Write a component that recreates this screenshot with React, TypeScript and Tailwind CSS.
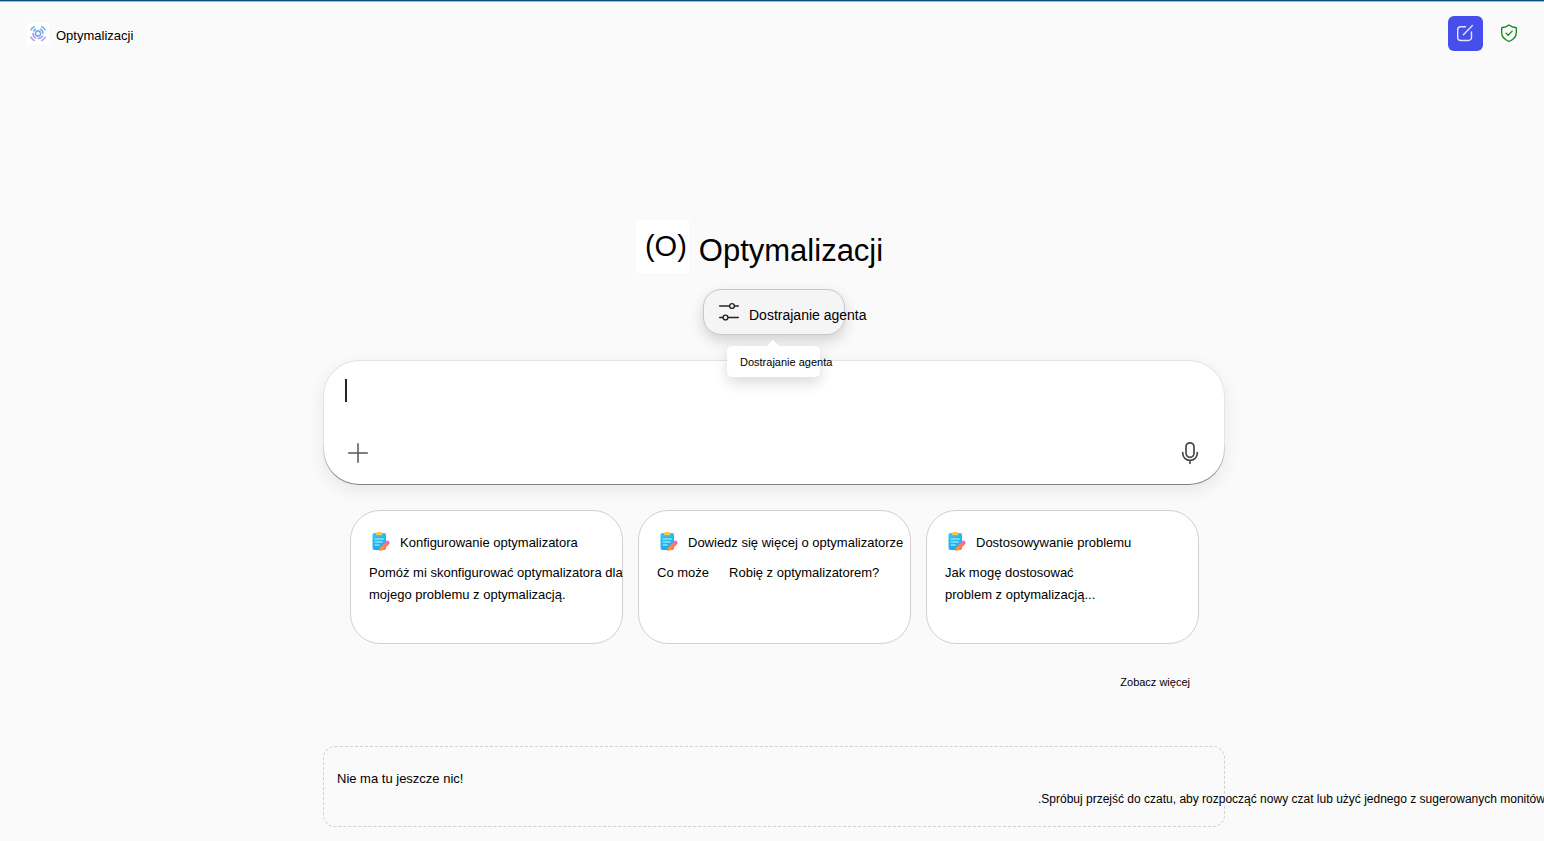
import type { ReactNode } from "react";

type Prompt = {
  title: string;
  lines: ReactNode[];
};

const prompts: Prompt[] = [
  {
    title: "Konfigurowanie optymalizatora",
    lines: ["Pomóż mi skonfigurować optymalizatora dla", "mojego problemu z optymalizacją."],
  },
  {
    title: "Dowiedz się więcej o optymalizatorze",
    lines: [
      <span className="flex gap-5">
        <span>Co może</span>
        <span>Robię z optymalizatorem?</span>
      </span>,
    ],
  },
  {
    title: "Dostosowywanie problemu",
    lines: ["Jak mogę dostosować", "problem z optymalizacją..."],
  },
];

export default function App() {
  return (
    <div className="min-h-screen overflow-x-hidden border-t border-[#0f4c81] bg-[#fafafa] font-['Liberation_Sans',Arial,sans-serif] text-[13px] text-black">
      <header className="flex items-start justify-between border-t border-[#9fb6cc] pr-[26px] pl-[27px] pt-[14px]">
        <div className="flex items-center gap-[7px] pt-[6px]">
          <span className="flex size-[22px] items-center justify-center bg-white">
            <AgentLogo />
          </span>
          <span className="pt-1 leading-5">Optymalizacji</span>
        </div>
        <div className="flex items-center gap-[17px]">
          <button
            type="button"
            aria-label="Nowy czat"
            className="flex size-[35px] items-center justify-center rounded-md bg-[#464feb]"
          >
            <ComposeIcon />
          </button>
          <button type="button" aria-label="Ochrona danych">
            <ShieldIcon />
          </button>
        </div>
      </header>

      <main className="pt-[169px] pb-[14px] pl-1">
        <div className="mx-auto max-w-[902px]">
          <div className="flex justify-center gap-[10px] pr-[29px]">
            <span className="flex h-[53px] w-[53px] items-center justify-end bg-white pr-[2px] text-[29px] leading-[53px]">
              (O)
            </span>
            <h1 className="pt-2 text-[31px] leading-[45px]">Optymalizacji</h1>
          </div>

          <div className="relative mx-auto mt-4 w-[142px]">
            <button
              type="button"
              className="flex h-[46px] w-full items-center gap-[10px] rounded-[18px] border border-[#c7c7c7] bg-[#f5f5f5] pl-[15px] text-sm whitespace-nowrap shadow-[0_6px_14px_rgba(0,0,0,0.16)]"
            >
              <TuneIcon />
              <span className="pt-[6px]">Dostrajanie agenta</span>
            </button>
            <div
              role="tooltip"
              className="absolute top-[57px] left-6 z-10 h-[31px] w-[93px] rounded-[5px] bg-white pl-[13px] text-[11px] leading-8 whitespace-nowrap shadow-[0_6px_14px_rgba(0,0,0,0.14)]"
            >
              <svg className="absolute -top-[6px] left-[39px]" width="14" height="7" viewBox="0 0 14 7">
                <path d="M0 7 6 .8Q7-.2 8 .8L14 7Z" fill="#fff" />
              </svg>
              Dostrajanie agenta
            </div>
          </div>

          <form className="mt-[25px] rounded-[36px] bg-[linear-gradient(to_bottom,#e3e3e3_65%,#808080)] p-px shadow-[0_6px_16px_rgba(30,50,70,0.09)]">
            <div className="flex h-[123px] flex-col justify-between rounded-[35px] bg-white pt-[18px] pr-[25px] pb-[19px] pl-[21px]">
              <div className="flex">
                <span className="h-[23px] w-[2px] bg-[#242424]" />
                <textarea
                  aria-label="Wiadomość"
                  rows={1}
                  className="h-[23px] flex-1 resize-none bg-transparent text-base leading-[23px] outline-none"
                />
              </div>
              <div className="flex items-center justify-between">
                <button type="button" aria-label="Dodaj" className="ml-[2px]">
                  <PlusIcon />
                </button>
                <button type="button" aria-label="Mikrofon">
                  <MicIcon />
                </button>
              </div>
            </div>
          </form>

          <div className="mt-[25px] grid grid-cols-3 gap-[15px] pr-[26px] pl-[27px]">
            {prompts.map((p) => (
              <PromptCard key={p.title} prompt={p} />
            ))}
          </div>

          <div className="mt-7 flex justify-end pr-[35px]">
            <a href="#" className="text-[11px] leading-5">
              Zobacz więcej
            </a>
          </div>

          <section className="mt-[54px] h-[81px] rounded-xl border border-dashed border-[#d1d1d1] px-[13px] pt-[22px]">
            <p className="leading-5">Nie ma tu jeszcze nic!</p>
            <p className="-mr-[13px] ml-auto w-[186px] text-xs leading-5 whitespace-nowrap">
              .Spróbuj przejść do czatu, aby rozpocząć nowy czat lub użyć jednego z sugerowanych monitów
            </p>
          </section>
        </div>
      </main>
    </div>
  );
}

function PromptCard({ prompt }: { prompt: Prompt }) {
  return (
    <button
      type="button"
      className="flex h-[134px] min-w-0 flex-col rounded-[30px] border border-[#d1d1d1] bg-white px-[18px] pt-[21px] text-left leading-[22px] whitespace-nowrap"
    >
      <span className="flex gap-[9px] pl-[2px]">
        <ClipboardIcon />
        <span>{prompt.title}</span>
      </span>
      <span className="mt-2 flex flex-col">
        {prompt.lines.map((line, i) => (
          <span key={i}>{line}</span>
        ))}
      </span>
    </button>
  );
}

function AgentLogo() {
  return (
    <svg width="16" height="16" viewBox="0 0 16 16" fill="none" stroke="url(#agent)" strokeWidth="1.6" strokeLinecap="round">
      <defs>
        <linearGradient id="agent" x1="0" y1="0" x2="0" y2="16" gradientUnits="userSpaceOnUse">
          <stop stopColor="#6cc0f2" />
          <stop offset=".5" stopColor="#7fa6ec" />
          <stop offset="1" stopColor="#bda6ec" />
        </linearGradient>
      </defs>
      <circle cx="8" cy="7.5" r="2.6" />
      <path d="M3.7 4.8A5.1 5.1 0 0 1 5.3 3.2M10.7 3.2a5.1 5.1 0 0 1 1.6 1.6M12.3 10.2a5.1 5.1 0 0 1-1.6 1.6M5.3 11.8a5.1 5.1 0 0 1-1.6-1.6M3 7.5a5 5 0 0 0 .7 2.6M13 7.5a5 5 0 0 0-.7-2.7M8 12.500a5 5 0 0 0 2.700-.7" />
      <path d="M1 3.700A8 8 0 0 1 4.200.8M11.800.8A8 8 0 0 1 15 3.700M15 11.300a8 8 0 0 1-3.200 3.200M4.200 14.500A8 8 0 0 1 1 11.300" />
    </svg>
  );
}

function ComposeIcon() {
  return (
    <svg width="19" height="19" viewBox="0 0 19 19" fill="none" stroke="#e4e5fc" strokeWidth="1.4" strokeLinecap="round">
      <path d="M9.500 2.700H4.700a3 3 0 0 0-3 3v7.800a3 3 0 0 0 3 3h7.800a3 3 0 0 0 3-3V8" />
      <path d="m7.400 10.700 9-9.200" />
    </svg>
  );
}

function ShieldIcon() {
  return (
    <svg width="18" height="20" viewBox="0 0 18 20" fill="none" stroke="#13851a" strokeWidth="1.300" strokeLinecap="round" strokeLinejoin="round">
      <path d="M9 .9c2 1.500 4.200 2.400 6.700 2.600.4 0 .6.200.6.500v4.600c0 4.200-2.300 7-7.300 8.900C4 15.600 1.700 12.800 1.700 8.600V4c0-.3.200-.5.6-.5C4.800 3.300 7 2.400 9 .9Z" />
      <path d="m6 9.100 2.100 2.100 4.100-4.100" />
    </svg>
  );
}

function TuneIcon() {
  return (
    <svg className="shrink-0" width="20" height="20" viewBox="0 0 20 20" fill="none" stroke="#242424" strokeWidth="1.4" strokeLinecap="round">
      <path d="M.7 4h9.600M15.500 4h3.800M.7 15.500H4M9 15.500h10.300" />
      <circle cx="13" cy="4" r="2.400" />
      <circle cx="6.500" cy="15.500" r="2.400" />
    </svg>
  );
}

function PlusIcon() {
  return (
    <svg width="22" height="22" viewBox="0 0 22 22" fill="none" stroke="#555" strokeWidth="1.5" strokeLinecap="round">
      <path d="M11 1.700v18.600M1.700 11h18.600" />
    </svg>
  );
}

function MicIcon() {
  return (
    <svg width="18" height="24" viewBox="0 0 18 24" fill="none" stroke="#484848" strokeWidth="1.700" strokeLinecap="round">
      <rect x="5" y="1.800" width="8" height="14.500" rx="4" />
      <path d="M1.700 11.500v.8c0 4 3.200 7 7.300 7s7.300-3 7.300-7v-.8M9 19.300v3" />
    </svg>
  );
}

function ClipboardIcon() {
  return (
    <svg className="shrink-0" width="20" height="20" viewBox="0 0 20 20" fill="none">
      <defs>
        <linearGradient id="board" x1="3" y1="2" x2="13" y2="19" gradientUnits="userSpaceOnUse">
          <stop stopColor="#35c5f5" />
          <stop offset="1" stopColor="#12a5e8" />
        </linearGradient>
        <linearGradient id="pencil" x1="18" y1="10" x2="9" y2="19" gradientUnits="userSpaceOnUse">
          <stop stopColor="#e95ad0" />
          <stop offset=".25" stopColor="#f2709a" />
          <stop offset=".4" stopColor="#ff7d45" />
          <stop offset="1" stopColor="#ff9a3c" />
        </linearGradient>
      </defs>
      <rect x="1.500" y="1" width="13.500" height="17" rx="2" fill="url(#board)" />
      <rect x="5" y="0" width="6.500" height="3.200" rx="1.500" fill="#fdc43f" />
      <path d="M4.300 7h8M4.300 10h7M4.300 13h4" stroke="#c8f1ff" strokeWidth="1.200" strokeLinecap="round" />
      <path d="M15 9.300a2 2 0 0 1 2.800 0l.2.200a2 2 0 0 1 0 2.800l-5.700 5.600-3.200 1c-.4.100-.7-.2-.6-.6l.8-3.300Z" fill="url(#pencil)" />
    </svg>
  );
}
